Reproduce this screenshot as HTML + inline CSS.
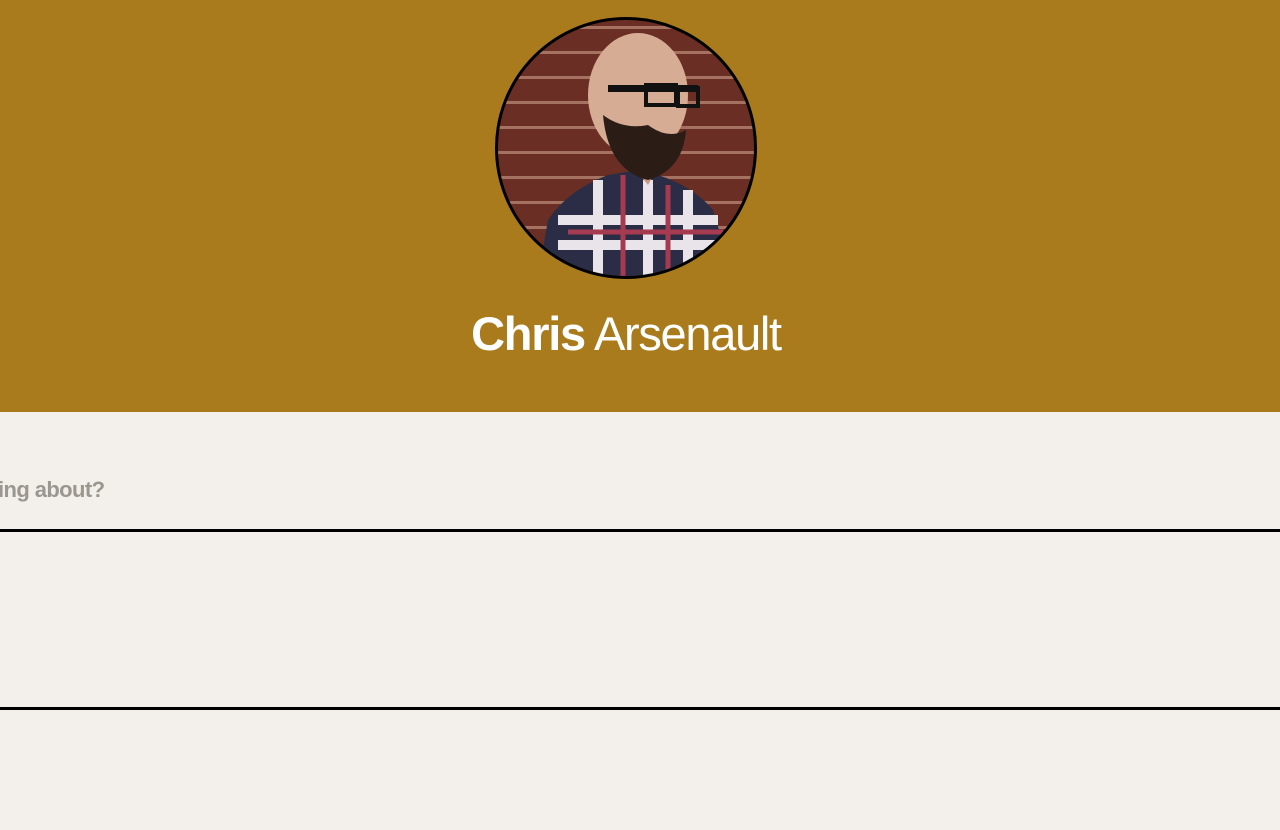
<!DOCTYPE html>
<html><head><style>
body{margin:0;width:1280px;height:830px;overflow:hidden;background:#f3f0eb;font-family:"Liberation Sans",sans-serif;position:relative}
.hero{position:absolute;left:0;top:0;width:1280px;height:412px;background:#a97b1c}
.av{position:absolute;left:495px;top:17px;width:256px;height:256px;border:3px solid #000;border-radius:50%;overflow:hidden;background:
repeating-linear-gradient(0deg,#6b2e24 0 22px,#a57262 22px 25px);}
.name{position:absolute;left:0;width:1252px;top:306px;text-align:center;color:#fff;font-size:47px;letter-spacing:-1.3px}
.q{position:absolute;left:-2px;top:477px;font-size:22px;font-weight:bold;color:#9b9690;letter-spacing:-0.6px}
.l{position:absolute;left:0;width:1280px;height:3px;background:#000}
</style></head><body>
<div class="hero">
<div class="av">
<svg width="256" height="256" viewBox="0 0 256 256">
<path d="M40 256 L50 200 Q70 170 110 155 L140 150 Q190 160 215 190 L235 256Z" fill="#2a2d45"/>
<path d="M60 200 L220 200 M60 225 L230 225 M100 160 L100 256 M150 160 L150 256 M190 170 L190 256" stroke="#e9e4ea" stroke-width="10"/>
<path d="M70 212 L225 212 M125 155 L125 256 M170 165 L170 256" stroke="#a63a50" stroke-width="5"/>
<path d="M105 110 L150 165 L175 120Z" fill="#c99a84"/>
<ellipse cx="140" cy="75" rx="50" ry="62" fill="#d6ac94"/>
<path d="M105 95 Q110 150 150 160 Q185 150 188 110 Q170 120 150 105 Q125 110 105 95Z" fill="#2b1d16"/>
<rect x="110" y="65" width="90" height="7" fill="#111"/>
<rect x="148" y="65" width="30" height="20" fill="none" stroke="#111" stroke-width="4"/>
<rect x="180" y="68" width="20" height="18" fill="none" stroke="#111" stroke-width="4"/>
</svg>
</div>
<div class="name"><b>Chris</b> Arsenault</div>
</div>
<div class="q">ing about?</div>
<div class="l" style="top:529px"></div>
<div class="l" style="top:707px"></div>
</body></html>
